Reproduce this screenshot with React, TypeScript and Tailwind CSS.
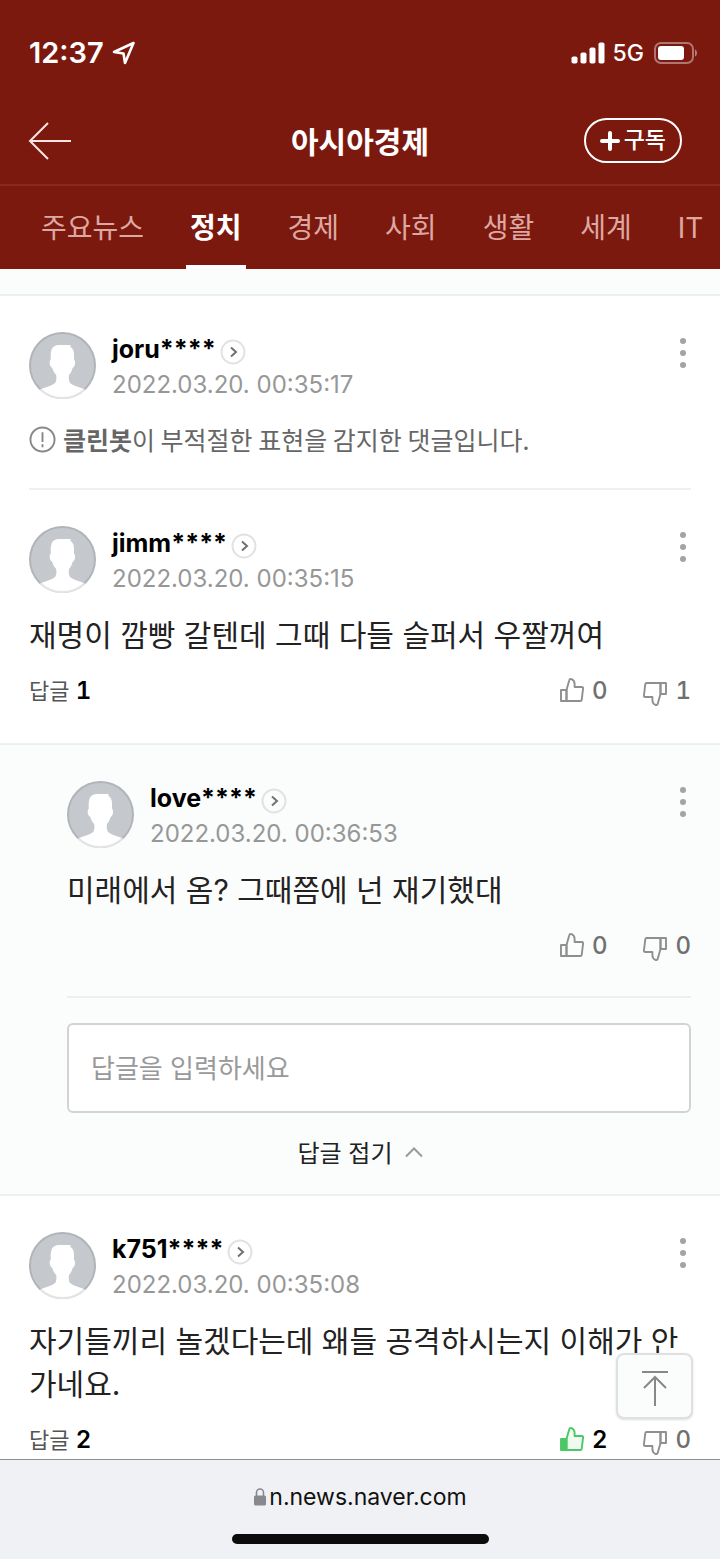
import { useState } from 'react'
import type { ReactNode } from 'react'

const SECTIONS = ['주요뉴스', '정치', '경제', '사회', '생활', '세계', 'IT']

function Avatar() {
  return (
    <svg viewBox="0 0 67 67" className="size-[67px] shrink-0" aria-hidden="true">
      <defs>
        <clipPath id="avatar-clip">
          <circle cx="33.5" cy="33.5" r="33.5" />
        </clipPath>
      </defs>
      <g clipPath="url(#avatar-clip)">
        <rect width="67" height="67" fill="#c5c9ce" />
        <path
          d="M22.500 18C23.500 14.500 26.500 13 30.500 13h11v2c2.500 1.500 3.500 4 3.500 7.500v5.500c1.500.5 1.500 5-.3 7-.5.5-1 .8-1.300 1.500-.7 3-2 5-3.400 6.500-.5 3-.2 6 1 8C42.500 52.500 46 54 50 55.200c3 .8 5.500 1.800 8 3.300L52 67H15L9 58.500c2.500-1.500 5-2.300 8-3.300 4-1.200 7.500-2.700 9.200-4.200 1.200-2 1.500-5 1-8-1.500-1.500-3-3.500-3.700-6.500-.3-.7-.8-1-1.300-1.500-1.800-2-2-6.500-.5-7v-4c0-2.500.3-4.300.8-6z"
          fill="#fff"
        />
      </g>
      <circle cx="33.5" cy="33.5" r="32.500" fill="none" stroke="#000" strokeOpacity="0.1" strokeWidth="2" />
    </svg>
  )
}

function ThumbIcon({ down = false, active = false }: { down?: boolean; active?: boolean }) {
  const color = active ? '#4cc764' : '#8f8f8f'
  return (
    <svg
      viewBox="0 0 24 24"
      className={down ? 'mt-1.5 size-6 rotate-180' : '-mt-0.5 size-6'}
      fill={active ? '#effaf1' : 'none'}
      stroke={color}
      strokeWidth="1.900"
      strokeLinejoin="round"
      aria-hidden="true"
    >
      <path d="M6.500 12 9.200 2.400c.3-1.200 1.300-1.700 2.400-1.200 1.800.8 3 2.500 3 4.600V9h7.300c.8 0 1.300.6 1.200 1.400L21.700 21.800c-.1.700-.7 1.200-1.400 1.200H6.500z" />
      <path d="M1 12h5.500v11H1z" fill={active ? color : 'none'} />
    </svg>
  )
}

function MoreButton() {
  return (
    <button type="button" aria-label="더보기" className="ml-auto mt-1 flex w-4 flex-col items-center gap-1.5 py-0.5">
      <span className="size-1.5 rounded-full bg-[#a3a3a3]" />
      <span className="size-1.5 rounded-full bg-[#a3a3a3]" />
      <span className="size-1.5 rounded-full bg-[#a3a3a3]" />
    </button>
  )
}

function CommentHeader({ name, date }: { name: string; date: string }) {
  return (
    <div className="flex items-start">
      <Avatar />
      <div className="ml-4">
        <a href="#" className="flex h-9 items-center gap-1 text-[25px] font-bold text-black">
          {name}
          <svg viewBox="0 0 26 26" className="mt-1 size-[26px]" fill="none" aria-hidden="true">
            <circle cx="13" cy="13" r="11.500" stroke="#e2e2e2" strokeWidth="2" />
            <path d="m11 8.500 5 4.500-5 4.500" stroke="#707070" strokeWidth="2" />
          </svg>
        </a>
        <time className="block text-[24px] leading-[34px] text-[#979797]">{date}</time>
      </div>
      <MoreButton />
    </div>
  )
}

function Reactions({ up, down, liked = false }: { up: number; down: number; liked?: boolean }) {
  return (
    <div className="ml-auto flex h-9 items-center gap-9 text-[24px] font-medium tabular-nums text-[#707070]">
      <button
        type="button"
        aria-label="공감"
        className={liked ? 'flex items-center gap-2 font-semibold text-black' : 'flex items-center gap-2'}
      >
        <ThumbIcon active={liked} />
        {up}
      </button>
      <button type="button" aria-label="비공감" className="flex items-center gap-2">
        <ThumbIcon down />
        {down}
      </button>
    </div>
  )
}

function ReplyCount({ count }: { count: number }) {
  return (
    <button type="button" className="text-[22px] text-[#555]">
      답글 <strong className="text-[24px] font-semibold tabular-nums text-black">{count}</strong>
    </button>
  )
}

function CommentBody({ children }: { children: ReactNode }) {
  return <p className="mt-[18px] break-keep text-[30px] leading-[43px] text-[#222]">{children}</p>
}

function StatusBar() {
  return (
    <div className="flex h-[104px] items-center px-[29px] pt-0.5 text-white">
      <span className="text-[29px] font-semibold">12:37</span>
      <svg viewBox="0 0 24 24" className="ml-2 size-6" fill="none" stroke="#fff" strokeWidth="2.600" strokeLinejoin="round" aria-hidden="true">
        <path d="M21.500 2 2 11l9.500 1.500L13 22z" />
      </svg>
      <svg viewBox="0 0 34 22" className="ml-auto h-[22px] w-[34px]" fill="#fff" aria-hidden="true">
        <rect x="0.500" y="14.500" width="6" height="7" rx="1.800" />
        <rect x="9.500" y="10.500" width="6" height="11" rx="1.800" />
        <rect x="18.500" y="5.500" width="6" height="16" rx="1.800" />
        <rect x="27.500" y="0.500" width="6" height="21" rx="1.800" />
      </svg>
      <span className="ml-2 text-[23px] font-medium">5G</span>
      <svg viewBox="0 0 44 22" className="-mr-[7px] ml-2.5 h-[22px] w-11" fill="none" aria-hidden="true">
        <rect x="1" y="1" width="38" height="20" rx="6" stroke="#fff" strokeOpacity="0.400" strokeWidth="2" />
        <rect x="4" y="4" width="26" height="14" rx="3" fill="#fff" />
        <path d="M41 7.500c2.600.8 2.600 6.200 0 7z" fill="#fff" fillOpacity="0.450" />
      </svg>
    </div>
  )
}

function App() {
  const [section, setSection] = useState('정치')
  const [reply, setReply] = useState('')

  return (
    <div className="flex min-h-screen flex-col bg-white font-['Inter','Noto_Sans_CJK_KR',sans-serif]">
      <header className="bg-[#7c190f]">
        <StatusBar />
        <div className="grid h-[82px] grid-cols-[1fr_auto_1fr] items-start border-b-2 border-[#872b21] px-7 text-white">
          <a href="#" aria-label="뒤로" className="mt-4">
            <svg viewBox="0 0 44 40" className="h-10 w-11" fill="none" stroke="#fbe4e1" strokeWidth="2" aria-hidden="true">
              <path d="M20 3 2 21l18 18M2 21h41" />
            </svg>
          </a>
          <h1 className="mt-4 text-[30px] font-bold leading-[44px]">아시아경제</h1>
          <button
            type="button"
            className="mr-2.5 mt-3.5 flex h-[45px] items-center gap-1 justify-self-end rounded-full border-2 border-white px-3.5 text-[23px] font-medium"
          >
            <svg viewBox="0 0 20 20" className="size-5" stroke="#fff" strokeWidth="4" strokeLinecap="round" aria-hidden="true">
              <path d="M10 2v16M2 10h16" />
            </svg>
            구독
          </button>
        </div>
        <nav className="flex h-[83px] gap-[38px] overflow-hidden px-[37px]">
          {SECTIONS.map((name) => (
            <a
              key={name}
              href="#"
              onClick={() => setSection(name)}
              className={
                name === section
                  ? 'shrink-0 border-b-4 border-white px-1 pt-[5px] text-[28px] font-bold leading-[74px] text-white'
                  : 'shrink-0 px-1 pt-[5px] text-[28px] leading-[74px] text-[#dea8a2]'
              }
            >
              {name}
            </a>
          ))}
        </nav>
      </header>

      <main className="relative flex-1">
        <div className="h-[27px] border-b-2 border-[#eeefef] bg-[#fbfcfc]" />

        <article className="mx-[29px] border-b-2 border-[#efefef] pb-[30px] pt-9">
          <CommentHeader name="joru****" date="2022.03.20. 00:35:17" />
          <p className="mt-[18px] flex items-center gap-[7px] font-['Noto_Sans_CJK_KR',sans-serif] text-[25px] leading-[38px] text-[#666]">
            <svg viewBox="0 0 28 28" className="size-[27px]" fill="none" stroke="#888" strokeWidth="2" aria-hidden="true">
              <circle cx="14" cy="14" r="12.500" />
              <path d="M14 6.500v10M14 19v3" />
            </svg>
            <span>
              <strong className="font-bold">클린봇</strong>이 부적절한 표현을 감지한 댓글입니다.
            </span>
          </p>
        </article>

        <article className="px-[29px] pb-[34px] pt-9">
          <CommentHeader name="jimm****" date="2022.03.20. 00:35:15" />
          <CommentBody>재명이 깜빵 갈텐데 그때 다들 슬퍼서 우짤꺼여</CommentBody>
          <div className="mt-4 flex items-center">
            <ReplyCount count={1} />
            <Reactions up={0} down={1} />
          </div>
        </article>

        <section className="border-y-2 border-[#eeefef] bg-[#fbfcfc] pl-[67px] pr-[29px]">
          <article className="border-b-2 border-[#eeefef] pb-8 pt-9">
            <CommentHeader name="love****" date="2022.03.20. 00:36:53" />
            <CommentBody>미래에서 옴? 그때쯤에 넌 재기했대</CommentBody>
            <div className="mt-4 flex items-center">
              <Reactions up={0} down={0} />
            </div>
          </article>
          <input
            type="text"
            aria-label="답글"
            placeholder="답글을 입력하세요"
            value={reply}
            onChange={(event) => setReply(event.target.value)}
            className="mt-[25px] block h-[90px] w-full rounded-md border-2 border-[#d2d3d3] bg-white px-[22px] text-[26px] text-black placeholder:text-[#999]"
          />
          <div className="-ml-[38px] flex h-[81px] items-center justify-center">
            <button type="button" className="flex items-center gap-3 text-[24px] text-[#222]">
              답글 접기
              <svg viewBox="0 0 18 12" className="mb-1 h-3 w-[18px]" fill="none" stroke="#999" strokeWidth="2" aria-hidden="true">
                <path d="m1 10.500 8-8 8 8" />
              </svg>
            </button>
          </div>
        </section>

        <article className="px-[29px] pt-9">
          <CommentHeader name="k751****" date="2022.03.20. 00:35:08" />
          <CommentBody>자기들끼리 놀겠다는데 왜들 공격하시는지 이해가 안 가네요.</CommentBody>
          <div className="mt-4 flex items-center">
            <ReplyCount count={2} />
            <Reactions up={2} down={0} liked />
          </div>
        </article>

        <button
          type="button"
          aria-label="맨 위로"
          className="absolute bottom-10 right-[27px] flex h-[66px] w-[77px] items-center justify-center rounded-lg border-2 border-[#dfe1e1] bg-[#fbfcfc] pt-1 shadow-sm"
        >
          <svg viewBox="0 0 28 36" className="h-9 w-7" fill="none" stroke="#888" strokeWidth="2" aria-hidden="true">
            <path d="M1 2h26M14 7v29M3 18 14 7l11 11" />
          </svg>
        </button>
      </main>

      <footer className="flex h-[100px] flex-col items-center border-t border-[#8d908f] bg-[#f0f1f5]">
        <a href="#" className="mt-5 flex items-center gap-0.5 text-[23px] leading-[34px] text-[#111]">
          <svg viewBox="0 0 14 20" className="h-5 w-3.5" aria-hidden="true">
            <rect x="1" y="8.500" width="12" height="10" rx="1.500" fill="#88898d" />
            <path d="M3.500 9V5.500a3.500 3.500 0 0 1 7 0V9" fill="none" stroke="#88898d" strokeWidth="1.600" />
          </svg>
          n.news.naver.com
        </a>
        <div className="mt-5 h-2.5 w-[257px] rounded-full bg-[#0c0c0d]" />
      </footer>
    </div>
  )
}

export default App
